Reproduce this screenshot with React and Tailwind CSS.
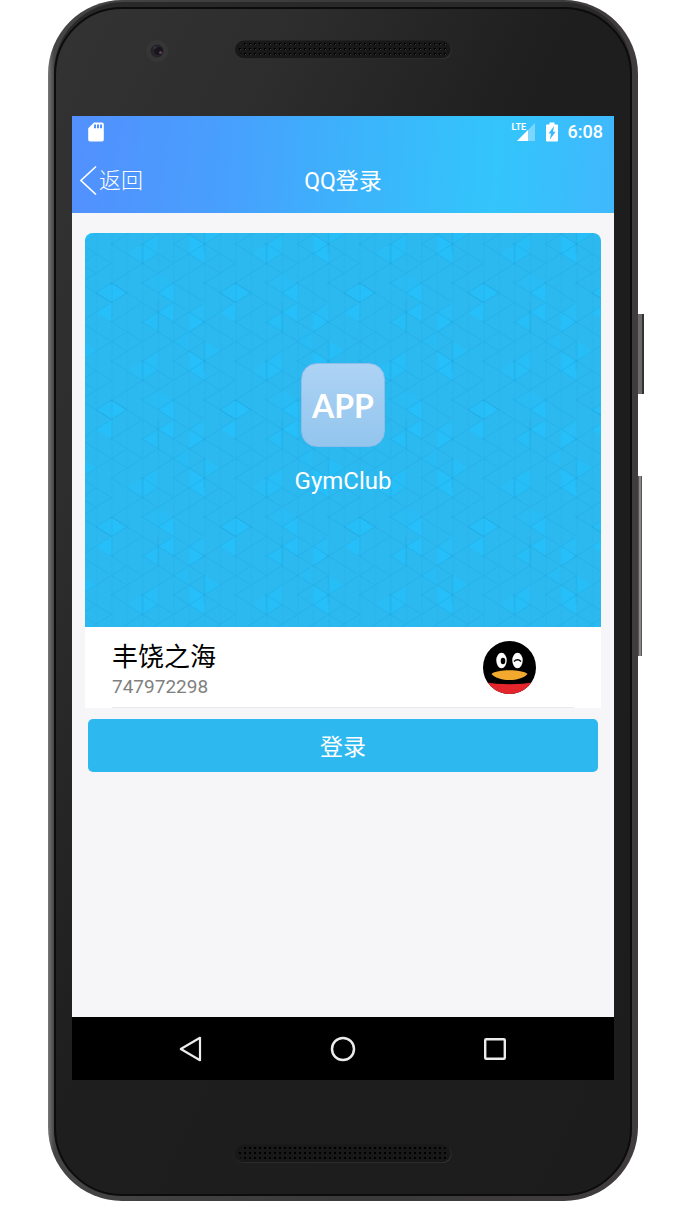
import React from 'react';

const COL = 15.5;
const ROW = 9.75;

// Highlighted triangles of the wallpaper, as [column, half-row] vertices.
const TRIANGLES = [
  [[[0, 0], [-1, 1], [0, 2]], 0.5],
  [[[0, 0], [1, 1], [0, 2]], 0.6],
  [[[-1, 3], [0, 2], [0, 4]], 0.6],
  [[[3, 1], [4, 0], [4, 2]], 0.6],
  [[[3, 3], [4, 2], [4, 4]], 0.6],
  [[[5, 3], [6, 2], [6, 4]], 0.35],
  [[[5, 3], [6, 4], [5, 5]], 0.6],
  [[[2, 4], [3, 3], [3, 5]], 0.4],
  [[[6, 6], [7, 7], [6, 8]], 0.5],
  [[[5, 7], [6, 8], [5, 9]], 0.6],
  [[[5, 9], [6, 8], [6, 10]], 0.6],
  [[[2, 8], [3, 7], [3, 9]], 0.4],
  [[[1, 9], [2, 8], [2, 10]], 0.35],
  [[[2, 8], [3, 9], [2, 10]], 0.45],
  [[[3, 11], [4, 12], [3, 13]], 0.25],
  [[[2, 12], [3, 11], [3, 13]], 0.2],
  [[[4, 6], [5, 5], [5, 7]], 0.25],
];

const points = (vertices, dx, dy) =>
  vertices.map(([x, y]) => `${(x + dx) * COL},${(y + dy) * ROW}`).join(' ');

function Wallpaper() {
  const shifts = [[0, 0], [8, 0], [0, -12], [8, -12]];
  const diagonals = [-8, -6, -4, -2, 0, 2, 4, 6, 8, 10, 12, 14, 16, 18, 20];
  return (
    <svg className="absolute inset-0 h-full w-full" aria-hidden="true">
      <defs>
        <pattern id="triangles" x="26.5" y="50" width="124" height="117" patternUnits="userSpaceOnUse">
          {shifts.map(([dx, dy]) =>
            TRIANGLES.map(([v, o], i) => (
              <polygon key={`${dx}${dy}${i}`} points={points(v, dx, dy)} fill="#21c3ff" fillOpacity={o} />
            ))
          )}
          <g fill="none" stroke="#1293cc" strokeWidth="0.8" strokeOpacity="0.3" strokeDasharray="55 18 37 36">
            {diagonals.map((d) => (
              <path
                key={d}
                strokeDashoffset={(((d + 12) % 12) * 55) % 146}
                d={`M0 ${d * ROW}L124 ${(d + 8) * ROW}M0 ${d * ROW}L124 ${(d - 8) * ROW}`}
              />
            ))}
          </g>
          <g stroke="#1598d0" strokeWidth="0.7" strokeOpacity="0.15">
            {[0, 1, 2, 3, 4, 5, 6, 7].map((c) => (
              <path key={c} d={`M${c * COL + 0.4} 0V117`} />
            ))}
          </g>
          <path
            d="M0 0L15.5 9.75L0 19.5M0 0V39M124 0L108.5 9.75L124 19.5M62 0L46.5 9.75M46.5 29.25L62 39M77.5 29L93 39L77.5 49M77.5 68L93 78L77.5 88M46.5 19V50M31 78V98M93 58V88"
            fill="none" stroke="#0c86bd" strokeWidth="0.8" strokeOpacity="0.28"
          />
        </pattern>
      </defs>
      <rect width="100%" height="100%" fill="url(#triangles)" />
    </svg>
  );
}

function Speaker({ id, dot }) {
  return (
    <svg className="h-5 w-[217px]" viewBox="0 0 217 20" aria-hidden="true">
      <defs>
        <pattern id={id} x="3" y="2" width="5" height="5" patternUnits="userSpaceOnUse">
          <rect x="1" y="1" width="2" height="2" fill="#000" />
          <rect x="2" y="2" width="1" height="1" fill={dot} />
        </pattern>
      </defs>
      <rect x="0.5" y="1" width="216" height="18" rx="9" fill="#3f3f3f" />
      <rect x="0" y="0.5" width="216" height="18" rx="9" fill="#181818" />
      <rect x="4" y="2" width="209" height="15" rx="7" fill={`url(#${id})`} />
    </svg>
  );
}

function Camera() {
  return (
    <svg className="ml-[74px] h-[22px] w-[22px]" viewBox="0 0 22 22" aria-hidden="true">
      <circle cx="11" cy="11" r="11" fill="#363637" />
      <circle cx="11" cy="11" r="6.5" fill="#242328" />
      <circle cx="12.5" cy="11" r="4" fill="#17151b" />
      <circle cx="14.5" cy="12.5" r="1.6" fill="#59404f" />
      <circle cx="9" cy="7.5" r="1.5" fill="#2e343c" />
    </svg>
  );
}

function StatusBar() {
  return (
    <div className="flex h-8 items-center justify-between pl-4 pr-[11px] text-white">
      <svg className="h-5 w-4" viewBox="0 0 16 20" aria-hidden="true">
        <path
          d="M6 .5h8a1.8 1.8 0 0 1 1.8 1.8v15.4a1.8 1.8 0 0 1-1.8 1.8H2A1.8 1.8 0 0 1 .2 17.7V6.3zM6 2.5v3.7h2V2.5zm3 0v3.7h2V2.5zm3 0v3.7h2V2.5z"
          fill="currentColor" fillRule="evenodd"
        />
      </svg>
      <div className="flex items-center">
        <div className="relative mr-[11px]">
          <svg className="h-5 w-[23px]" viewBox="0 0 23 20" aria-hidden="true">
            <path d="M23 1v18H5z" fill="#fff" fillOpacity="0.35" />
            <path d="M16 8v11H5z" fill="#fff" />
          </svg>
          <span className="absolute left-0 top-0 font-['Liberation_Sans_Narrow','Roboto',sans-serif] text-[9px] font-bold leading-[10px]">LTE</span>
        </div>
        <svg className="mr-[10px] h-5 w-3" viewBox="0 0 12 20" aria-hidden="true">
          <path d="M3.5.5h5v2H11a1 1 0 0 1 1 1v15a1 1 0 0 1-1 1H1a1 1 0 0 1-1-1v-15a1 1 0 0 1 1-1h2.5z" fill="#fff" />
          <path d="M8.2 4L2.5 11.5H5L3.9 17.5L9.6 9.7H7z" fill="#38b8fb" />
        </svg>
        <time className="text-[18px] font-medium leading-6">6:08</time>
      </div>
    </div>
  );
}

function Header() {
  return (
    <header className="bg-[linear-gradient(94deg,#5290fe_0%,#489ffd_28%,#3bb5fb_54%,#33c5fb_78%,#40b8fd_100%)] pb-px text-white">
      <StatusBar />
      <div className="grid h-16 grid-cols-[1fr_auto_1fr] items-center px-2">
        <button type="button" className="flex items-center gap-[2px] justify-self-start text-[22px] font-light leading-8">
          <svg className="h-[30px] w-[17px]" viewBox="0 0 17 30" fill="none" stroke="currentColor" strokeWidth="1.6" aria-hidden="true">
            <path d="M16 1.5L1 15.5L16 29.5" />
          </svg>
          <span className="pt-[2px]">返回</span>
        </button>
        <h1 className="pt-1 text-[23px] leading-8">QQ登录</h1>
      </div>
    </header>
  );
}

function Penguin() {
  return (
    <svg className="h-[53px] w-[53px]" viewBox="0 0 53 53" role="img" aria-label="QQ">
      <defs>
        <clipPath id="avatar"><circle cx="26.5" cy="26.5" r="26.5" /></clipPath>
      </defs>
      <g clipPath="url(#avatar)">
        <rect width="53" height="53" fill="#000" />
        <path d="M0 41Q26.5 45.5 53 41V53H0z" fill="#e5252c" />
        <ellipse cx="18.5" cy="19.5" rx="5.2" ry="7.8" fill="#fff" />
        <ellipse cx="34.5" cy="19.5" rx="5.2" ry="7.8" fill="#fff" />
        <ellipse cx="20" cy="20" rx="2.3" ry="3.3" fill="#000" />
        <path d="M31 20.5Q34.5 17 38 20.5" fill="none" stroke="#000" strokeWidth="1.5" />
        <path d="M8.5 33C14 28 39 28 44.5 33C37 41 16 41 8.5 33z" fill="#f2a92d" />
      </g>
    </svg>
  );
}

function NavBar() {
  return (
    <nav className="flex h-[63px] items-center justify-between bg-black px-[106px] text-[#ececec]">
      <button type="button" aria-label="Back">
        <svg className="h-[26px] w-[26px]" viewBox="0 0 26 26" fill="none" stroke="currentColor" strokeWidth="2.2" strokeLinejoin="round">
          <path d="M22 1.8V24.2L2.8 13z" />
        </svg>
      </button>
      <button type="button" aria-label="Home">
        <svg className="h-[26px] w-[26px]" viewBox="0 0 26 26" fill="none" stroke="currentColor" strokeWidth="2.5">
          <circle cx="13" cy="13" r="11" />
        </svg>
      </button>
      <button type="button" aria-label="Recent apps">
        <svg className="h-[26px] w-[26px]" viewBox="0 0 26 26" fill="none" stroke="currentColor" strokeWidth="2.4">
          <rect x="3.2" y="3.2" width="19.6" height="19.6" rx="1" />
        </svg>
      </button>
    </nav>
  );
}

export default function App() {
  return (
    <div className="min-h-screen bg-white pl-12 pr-[46px] font-['Roboto','Noto_Sans_CJK_SC',sans-serif]">
      <div className="relative">
        <div className="absolute -right-[6px] top-[314px] h-20 w-2 border-r-2 border-[#333] bg-[#6b6969]" />
        <div className="absolute -right-1 top-[476px] h-[180px] w-1 border-x border-[#555] bg-[#8a8888]" />
        <div className="relative rounded-[74px] bg-[linear-gradient(90deg,#777_0px,#454545_6px,#3a3a3a_50%,#403c3e_100%)] px-[6px] pb-[5px] pt-[2px]">
          <div className="rounded-[70px] bg-[#292929] pt-[5px]">
            <div className="rounded-[68px] border-2 border-[#0c0c0c] bg-[linear-gradient(115deg,#333334_0%,#2d2d2d_22%,#1e1e1e_46%,#1c1c1c_100%)] px-4">
              <div className="grid h-[107px] grid-cols-[1fr_217px_1fr] pt-[31px]">
                <Camera />
                <Speaker id="earpiece" dot="#3c3c3c" />
              </div>
              <div className="bg-[#f6f6f9]">
                <Header />
                <main className="min-h-[804px] px-[13px] pt-5">
                  <section className="relative flex min-h-[394px] flex-col items-center overflow-hidden rounded-t-lg bg-[#2cb9f0] pt-[130px] text-white">
                    <Wallpaper />
                    <div className="relative flex h-[84px] w-[84px] items-center justify-center rounded-2xl border border-[#8fbce8] bg-linear-to-b from-[#add3f4] to-[#93c5ee] pt-[2px] font-['Lato',sans-serif] text-[32px] font-bold leading-9">
                      APP
                    </div>
                    <h2 className="relative mt-[18px] text-[24px] leading-8">GymClub</h2>
                  </section>
                  <section className="bg-white px-[27px]">
                    <div className="flex items-start justify-between border-b border-[#e9e9eb] pb-2 pr-[38px] pt-3">
                      <div>
                        <p className="text-[26px] leading-9 text-black">丰饶之海</p>
                        <p className="text-[19px] leading-6 text-[#808080]">747972298</p>
                      </div>
                      <div className="pt-[2px]">
                        <Penguin />
                      </div>
                    </div>
                  </section>
                  <div className="px-[3px] pt-[11px]">
                    <button type="button" className="h-[53px] w-full rounded-[5px] bg-[#2db9f0] pt-1 text-[23px] leading-8 text-white">登录</button>
                  </div>
                </main>
                <NavBar />
              </div>
              <div className="flex h-[114px] items-start justify-center pt-16">
                <Speaker id="loudspeaker" dot="#000" />
              </div>
            </div>
          </div>
        </div>
      </div>
    </div>
  );
}
